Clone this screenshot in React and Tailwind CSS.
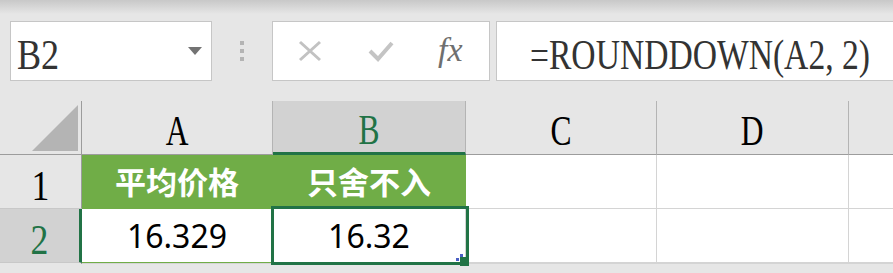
import React from 'react';

const serif = "font-['Liberation_Serif','Noto_Sans_CJK_SC',serif]";

const HeaderCell = ({ label, active }) => (
  <div
    className={`flex items-center justify-center border-r border-b border-r-[#b4b4b4] ${
      active ? 'bg-[#d2d2d2] border-b-[3px] border-b-[#217346] text-[#217346]' : 'bg-[#e6e6e6] border-b-[#9c9c9c] text-black'
    }`}
  >
    <span className={`${serif} inline-block text-[42px] leading-none pt-[6px] scale-x-[0.75]`}>{label}</span>
  </div>
);

const RowHead = ({ n, active }) => (
  <div
    className={`flex items-center justify-center border-b ${
      active
        ? 'bg-[#d2d2d2] border-r-[3px] border-r-[#217346] border-b-[#c8c8c8] text-[#217346]'
        : 'bg-[#e6e6e6] border-r border-r-[#9c9c9c] border-b-[#c8c8c8] text-black'
    }`}
  >
    <span className={`${serif} inline-block text-[42px] leading-none pt-[8px] scale-x-[0.85]`}>{n}</span>
  </div>
);

const Cell = ({ children, className = 'bg-white border-[#d4d4d4]' }) => (
  <div className={`flex items-center justify-center border-r border-b ${className}`}>
    {children}
  </div>
);

export default function App() {
  return (
    <div className="relative w-[893px] h-[273px] overflow-hidden bg-[#e6e6e6]">
      <div className="h-[14px] bg-linear-to-b from-[#c8c8c8] to-[#e6e6e6]" />

      {/* formula bar */}
      <div className="flex h-[60px] mt-[7px]">
        <div className="shrink-0 ml-[10px] w-[202px] flex items-center justify-between border border-[#c6c6c6] bg-white pl-[6px] pr-[9px]">
          <span className={`${serif} inline-block origin-left text-[42px] leading-none pt-[8px] scale-x-[0.86] text-[#333]`}>B2</span>
          <svg width="14" height="8" viewBox="0 0 14 8">
            <polygon points="0,0 14,0 7,8" fill="#737373" />
          </svg>
        </div>
        <div className="shrink-0 w-[60px] flex flex-col items-center justify-center gap-[4px]">
          <div className="w-[4px] h-[4px] bg-[#b4b4b4]" />
          <div className="w-[4px] h-[4px] bg-[#b4b4b4]" />
          <div className="w-[4px] h-[4px] bg-[#b4b4b4]" />
        </div>
        <div className="shrink-0 w-[218px] flex items-center border border-[#c6c6c6] bg-white pl-[25px]">
          <svg width="24" height="22" viewBox="0 0 24 22">
            <path d="M2 2 L22 20 M22 2 L2 20" stroke="#c2c2c2" strokeWidth="3" fill="none" />
          </svg>
          <svg className="ml-[46px]" width="26" height="22" viewBox="0 0 26 22">
            <path d="M2 11 L10 19 L24 3" stroke="#c4c4c4" strokeWidth="4" fill="none" />
          </svg>
          <span className={`${serif} ml-[44px] italic text-[34px] leading-none text-[#6f6f6f] pb-[2px]`}>fx</span>
        </div>
        <div className="min-w-0 ml-[6px] flex-1 flex items-center overflow-hidden border-y border-l border-[#c6c6c6] bg-white pl-[33px]">
          <span className={`${serif} inline-block origin-left whitespace-nowrap text-[42px] leading-none pt-[8px] scale-x-[0.8] text-[#333]`}>
            =ROUNDDOWN(A2, 2)
          </span>
        </div>
      </div>

      {/* sheet */}
      <div className="relative mt-[20px] grid grid-cols-[82px_191px_193px_191px_192px_1fr] grid-rows-[54px_54px_54px_1fr]">
        <div className="relative border-r border-b border-r-[#9c9c9c] border-b-[#9c9c9c] bg-[#e6e6e6]">
          <svg className="absolute left-0 top-0" width="82" height="54" viewBox="0 0 82 54">
            <polygon points="32,50 78,50 78,4" fill="#b4b4b4" />
          </svg>
        </div>
        <HeaderCell label="A" />
        <HeaderCell label="B" active />
        <HeaderCell label="C" />
        <HeaderCell label="D" />
        <div className="border-b border-b-[#9c9c9c] bg-[#e6e6e6]" />

        <RowHead n="1" />
        <Cell className="bg-[#70ad47] border-[#70ad47]">
          <span className="font-['Noto_Sans_CJK_SC',sans-serif] font-bold text-[31px] text-white">平均价格</span>
        </Cell>
        <Cell className="bg-[#70ad47] border-[#70ad47]">
          <span className="font-['Noto_Sans_CJK_SC',sans-serif] font-bold text-[31px] text-white">只舍不入</span>
        </Cell>
        <Cell />
        <Cell />
        <Cell className="bg-white border-[#d4d4d4] border-r-0" />

        <RowHead n="2" active />
        <Cell className="bg-white border-r-[#d4d4d4] border-b-[#70ad47]">
          <span className="font-['Noto_Sans','Noto_Sans_CJK_SC',sans-serif] text-[32px] text-black">16.329</span>
        </Cell>
        <Cell>
          <span className="font-['Noto_Sans','Noto_Sans_CJK_SC',sans-serif] text-[32px] text-black">16.32</span>
        </Cell>
        <Cell />
        <Cell />
        <Cell className="bg-white border-[#d4d4d4] border-r-0" />

        <div className="border-r border-r-[#9c9c9c] bg-[#e6e6e6]" />
        <Cell />
        <Cell />
        <Cell />
        <Cell />
        <Cell className="bg-white border-[#d4d4d4] border-r-0" />

        {/* selection of B2 */}
        <div className="absolute left-[271px] top-[105px] w-[198px] h-[59px] border-[3px] border-[#217346]" />
        <div className="absolute left-[456px] top-[157px] w-[3px] h-[3px] bg-[#4a5ec4]" />
        <div className="absolute left-[460px] top-[153px] w-[3px] h-[3px] bg-[#4a5ec4]" />
        <div className="absolute left-[460px] top-[156px] w-[9px] h-[9px] bg-[#217346]" />
      </div>
    </div>
  );
}
